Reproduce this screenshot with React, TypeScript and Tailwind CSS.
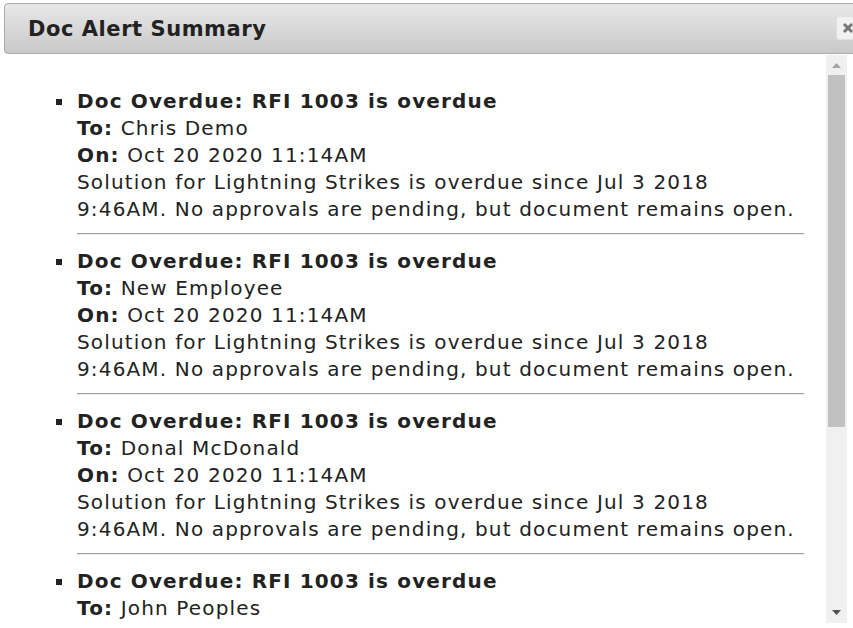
import React from "react";

const items = [
  "Chris Demo",
  "New Employee",
  "Donal McDonald",
  "John Peoples",
];

export default function App() {
  return (
    <div
      className="w-[853px] h-[628px] overflow-hidden bg-white text-[#222]"
      style={{ fontFamily: '"DejaVu Sans", Verdana, sans-serif' }}
    >
      <div className="ml-[4px] pt-[3px] w-[880px]">
        <div className="h-[51px] rounded-[4px] border border-[#aaaaaa] bg-gradient-to-b from-[#e8e8e8] to-[#c9c9c9] flex items-center pl-[23px] pt-[2px] relative">
          <span className="text-[21px] tracking-[0.55px] font-bold text-[#222] leading-none">Doc Alert Summary</span>
          <div className="absolute left-[831px] top-[12px] w-[24px] h-[24px] rounded-[3px] border border-[#e0e0e0] bg-[#f1f1f1] flex items-center justify-center">
            <svg width="12" height="12" viewBox="0 0 12 12">
              <path d="M2 2 L10 10 M10 2 L2 10" stroke="#777" strokeWidth="3" strokeLinecap="butt" />
            </svg>
          </div>
        </div>
        <div className="flex h-[569px]">
          <div className="w-[822px] overflow-hidden pt-[34px] pl-[52px]">
            <div className="text-[20px] tracking-[1.15px] leading-[27px]">
              {items.map((name, i) => {
                const last = i === items.length - 1;
                return (
                  <div key={i} className="flex">
                    <div className="w-[21px] shrink-0">
                      <div className="mt-[11px] w-[6px] h-[6px] bg-[#222]" />
                    </div>
                    <div>
                      <div className="font-bold">Doc Overdue: RFI 1003 is overdue</div>
                      <div>
                        <span className="font-bold">To:</span> {name}
                      </div>
                      {!last && (
                        <>
                          <div>
                            <span className="font-bold">On:</span> Oct 20 2020 11:14AM
                          </div>
                          <div className="whitespace-nowrap">
                            Solution for Lightning Strikes is overdue since Jul 3 2018
                            <br />
                            9:46AM. No approvals are pending, but document remains open.
                          </div>
                          <div className="mt-[10px] mb-[13px] w-[727px] border-t border-t-[#9d9d9d] border-b border-b-[#eeeeee]" />
                        </>
                      )}
                    </div>
                  </div>
                );
              })}
            </div>
          </div>
          <div className="mt-[1px] w-[21px] h-[568px] bg-[#f0f0f0] flex flex-col items-center">
            <div className="h-[20px] flex items-center justify-center">
              <svg width="9" height="5" viewBox="0 0 9 5">
                <path d="M0 5 L4.5 0 L9 5 Z" fill="#a3a3a3" />
              </svg>
            </div>
            <div className="w-[17px] h-[352px] bg-[#c1c1c1]" />
            <div className="flex-1" />
            <div className="h-[20px] flex items-center justify-center mb-[1px]">
              <svg width="9" height="5" viewBox="0 0 9 5">
                <path d="M0 0 L9 0 L4.5 5 Z" fill="#505050" />
              </svg>
            </div>
          </div>
        </div>
      </div>
    </div>
  );
}
